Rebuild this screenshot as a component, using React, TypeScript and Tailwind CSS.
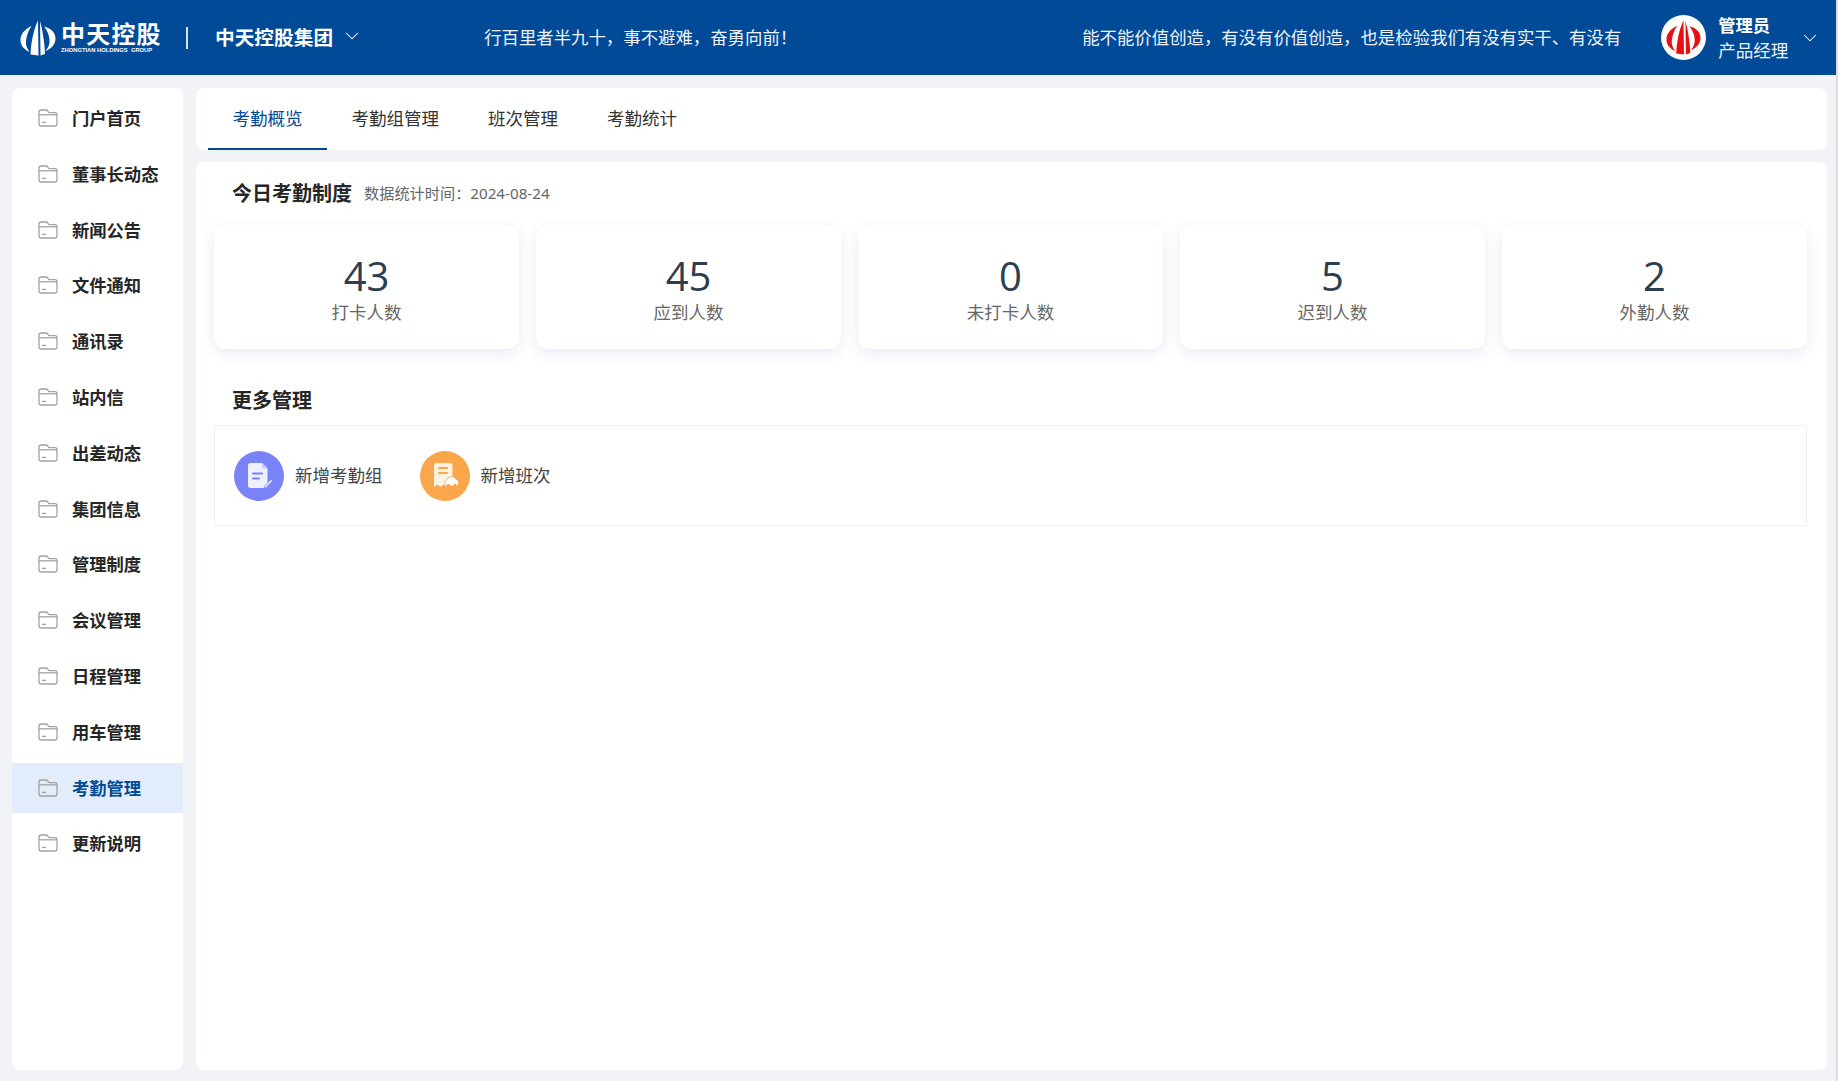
import { ChevronDown } from "lucide-react";

const FONT = "font-['Noto_Sans','Noto_Sans_CJK_SC',sans-serif]";

const menuItems = [
  "门户首页",
  "董事长动态",
  "新闻公告",
  "文件通知",
  "通讯录",
  "站内信",
  "出差动态",
  "集团信息",
  "管理制度",
  "会议管理",
  "日程管理",
  "用车管理",
  "考勤管理",
  "更新说明",
];

const tabs = ["考勤概览", "考勤组管理", "班次管理", "考勤统计"];

const stats = [
  { value: "43", label: "打卡人数" },
  { value: "45", label: "应到人数" },
  { value: "0", label: "未打卡人数" },
  { value: "5", label: "迟到人数" },
  { value: "2", label: "外勤人数" },
];

const LogoMark = ({ color, className }: { color: string; className?: string }) => (
  <svg viewBox="0 0 36 36" className={className} fill={color}>
    <path d="M11.500 6C4.500 9.500 0.500 14 0.500 20c0 5.500 3.500 9.500 9 12C7 28.500 5.500 25 6 21 6.500 15.500 8.500 10.500 11.500 6z" />
    <path d="M18 0.500L18.500 35.500 10.500 34.500C11 22 13.500 10 18 0.500z" />
    <path d="M20 1C22.500 10 24.500 22 25 34L20.500 35.500z" />
    <path d="M24 6.500c6.500 1.500 11.500 6 11.500 12 0 6-4.500 10.500-10 12.500 3-3.500 4.500-7.500 4-11.500C29 14.500 27 10 24 6.500z" />
  </svg>
);

const FolderIcon = () => (
  <svg viewBox="0 0 20 18" className="h-[18px] w-[20px]" fill="none" stroke="#a3a3a3" strokeWidth="1.3">
    <path d="M1 3.200C1 1.900 1.900 1 3.200 1H8.800L11 3.600H17C18.200 3.600 19 4.400 19 5.600V14.800C19 16.100 18.100 17 16.800 17H3.200C1.900 17 1 16.100 1 14.800V3.200Z" />
    <path d="M1 5.800H19" />
    <path d="M4 13.400H8.200" />
  </svg>
);

const NoteIcon = () => (
  <svg viewBox="0 0 28 28" className="h-[28px] w-[28px]">
    <path d="M3 3.500C3 2.100 4 1 5.500 1H16.500L22.500 7V23C22.500 24.900 21.400 26 19.500 26H5.500C4 26 3 24.900 3 23.500Z" fill="#eef0ff" />
    <path d="M17 0.500L23 6.500H19.500C18.100 6.500 17 5.500 17 4.500Z" fill="#c9cdfd" />
    <rect x="7" y="10.500" width="11" height="2" rx="1" fill="#7a82f7" />
    <rect x="7" y="15.500" width="8" height="2" rx="1" fill="#7a82f7" />
    <path d="M19.500 24.500L26 17.500L27.500 19L21 25.500L19 26Z" fill="#fff" stroke="#7a82f7" strokeWidth="0.8" />
  </svg>
);

const ShiftIcon = () => (
  <svg viewBox="0 0 28 28" className="h-[28px] w-[28px]">
    <path d="M3 3.500C3 2.100 4 1 5.500 1H19C20.400 1 21.500 2.100 21.500 3.500V24L18.500 22.500L15.500 25L12.500 22.500L9.500 25L6.500 22.500L3 25Z" fill="#fdf1df" />
    <rect x="7" y="5" width="10" height="2" rx="1" fill="#faa64a" />
    <rect x="7" y="10" width="10" height="2" rx="1" fill="#faa64a" />
    <path d="M14 20.500C14 18.700 15 17.800 16.500 17.300L18 15H23.500L25 17.300C26.500 17.800 27.500 18.700 27.500 20.500V24H14Z" fill="#fff" stroke="#faa64a" strokeWidth="0.8" />
    <circle cx="17.500" cy="23.500" r="1.800" fill="#faa64a" />
    <circle cx="24" cy="23.500" r="1.800" fill="#faa64a" />
  </svg>
);

const Header = () => (
  <header className="flex h-[75px] w-full shrink-0 items-center bg-[#004a98] text-white">
    <div className="ml-[20px] flex items-center">
      <LogoMark color="#ffffff" className="h-[36px] w-[36px]" />
      <div className="ml-[5px] flex w-[100px] flex-col items-start leading-none">
        <span className="whitespace-nowrap text-[24px] font-bold leading-[26px] tracking-[1.200px]">中天控股</span>
        <span className="whitespace-nowrap font-['Liberation_Sans',sans-serif] text-[5.800px] font-bold leading-[7px]">
          ZHONGTIAN HOLDINGS&nbsp;&nbsp;GROUP
        </span>
      </div>
    </div>
    <div className="ml-[25px] h-[22px] w-[2px] bg-[#d8e2f0]" />
    <span className="ml-[27px] whitespace-nowrap text-[19.700px] font-bold">中天控股集团</span>
    <ChevronDown className="ml-[8px] h-[22px] w-[22px] -translate-y-[2px]" strokeWidth={1.1} />
    <div className="ml-[121px] whitespace-nowrap text-[17.400px] text-[#eef2f8]">行百里者半九十，事不避难，奋勇向前！</div>
    <div className="ml-[285px] whitespace-nowrap text-[17.400px] text-[#eef2f8]">
      能不能价值创造，有没有价值创造，也是检验我们有没有实干、有没有
    </div>
    <div className="ml-[40px] flex h-[45px] w-[45px] shrink-0 items-center justify-center rounded-full bg-white">
      <LogoMark color="#e60f12" className="h-[35px] w-[35px]" />
    </div>
    <div className="ml-[12px] flex flex-col">
      <span className="text-[17.300px] font-bold leading-[25px]">管理员</span>
      <span className="whitespace-nowrap text-[17.500px] leading-[25px] text-[#eef2f8]">产品经理</span>
    </div>
    <ChevronDown className="ml-[11px] h-[22px] w-[22px]" strokeWidth={1.1} />
  </header>
);

const Sidebar = () => (
  <aside className="flex w-[171px] shrink-0 flex-col rounded-lg bg-white pt-[5px]">
    {menuItems.map((item) => {
      const active = item === "考勤管理";
      return (
        <div
          key={item}
          className={`mb-[5.800px] flex h-[50px] items-center pl-[26px] ${active ? "bg-[#e3ecfb] text-[#004a98]" : "text-[#262626]"}`}
        >
          <FolderIcon />
          <span className="ml-[14px] translate-y-px whitespace-nowrap text-[17.300px] font-bold">{item}</span>
        </div>
      );
    })}
  </aside>
);

const Tabs = () => (
  <nav className="flex h-[62px] shrink-0 rounded-lg bg-white pl-[12px]">
    {tabs.map((tab, i) => (
      <div
        key={tab}
        className={`flex h-full items-center whitespace-nowrap border-b-2 px-[24.500px] text-[17.500px] ${
          i === 0 ? "border-[#004a98] text-[#004a98]" : "border-transparent text-[#333333]"
        }`}
      >
        {tab}
      </div>
    ))}
  </nav>
);

const StatCard = ({ value, label }: { value: string; label: string }) => (
  <div className="flex h-[124px] flex-col items-center rounded-xl bg-white pt-[28px] shadow-[0_4px_14px_rgba(60,90,150,0.12)]">
    <span className="font-['Open_Sans',sans-serif] text-[40px] leading-[46px] text-[#2c3e50]">{value}</span>
    <span className="-mt-px text-[17.500px] leading-[28px] text-[#666666]">{label}</span>
  </div>
);

export default function App() {
  return (
    <div className={`flex h-[1081px] w-full flex-col border-r-2 border-[#dcdee2] bg-[#f1f3f6] ${FONT}`}>
      <Header />
      <div className="flex min-h-0 flex-1 gap-[13px] pb-[11px] pl-[12px] pr-[9px] pt-[13px]">
        <Sidebar />
        <main className="flex min-w-0 flex-1 flex-col gap-[12px]">
          <Tabs />
          <section className="flex-1 rounded-lg bg-white pl-[18px] pr-[20px]">
            <div className="flex h-[64px] items-center pb-px pl-[18px]">
              <h2 className="text-[20px] font-bold text-[#262626]">今日考勤制度</h2>
              <span className="ml-[12px] text-[15.200px] text-[#666666]">数据统计时间：2024-08-24</span>
            </div>
            <div className="-mt-px grid grid-cols-5 gap-[17px]">
              {stats.map((s) => (
                <StatCard key={s.label} value={s.value} label={s.label} />
              ))}
            </div>
            <h2 className="mt-[38px] pl-[18px] text-[20px] font-bold leading-[28px] text-[#262626]">更多管理</h2>
            <div className="mt-[10px] flex h-[101px] items-center rounded-[2px] border border-[#f0f0f0] pl-[19px]">
              <div className="flex items-center">
                <div className="flex h-[50px] w-[50px] items-center justify-center rounded-full bg-[#7a82f7]">
                  <NoteIcon />
                </div>
                <span className="ml-[11px] text-[17.500px] text-[#444444]">新增考勤组</span>
              </div>
              <div className="ml-[37px] flex items-center">
                <div className="flex h-[50px] w-[50px] items-center justify-center rounded-full bg-[#faa64a]">
                  <ShiftIcon />
                </div>
                <span className="ml-[11px] text-[17.500px] text-[#444444]">新增班次</span>
              </div>
            </div>
          </section>
        </main>
      </div>
    </div>
  );
}
